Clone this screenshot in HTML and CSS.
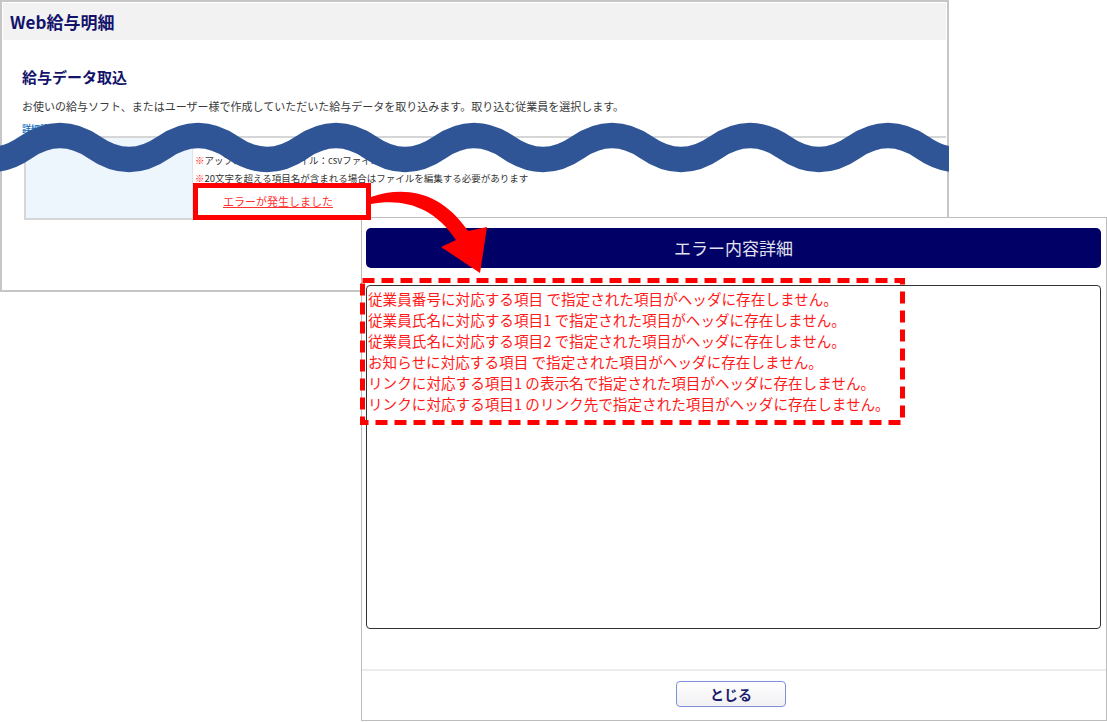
FILE: index.html
```html
<!DOCTYPE html>
<html lang="ja">
  <head>
    <meta charset="UTF-8" />
    <meta name="viewport" content="width=device-width, initial-scale=1.0" />
    <title>Web給与明細 - エラー内容詳細</title>
    <link rel="stylesheet" href="styles.css">
  </head>
  <body>
    <div class="canvas">
      <section class="page-window">
        <header class="app-header">Web給与明細</header>
        <div class="page-body">
          <h2 class="page-title">給与データ取込</h2>
          <p class="lead">お使いの給与ソフト、またはユーザー様で作成していただいた給与データを取り込みます。取り込む従業員を選択します。</p>
          <a class="detail-link">詳細設定</a>
          <div class="import-box">
            <div class="import-label"></div>
            <div class="import-main">
              <p class="note"><span class="mark">※</span>アップロードするファイル：csvファイル</p>
              <p class="note"><span class="mark">※</span>20文字を超える項目名が含まれる場合はファイルを編集する必要があります</p>
              <a class="error-link">エラーが発生しました</a>
            </div>
          </div>
        </div>
      </section>

      <section class="dialog">
        <div class="dialog-main">
          <h3 class="dialog-title">エラー内容詳細</h3>
          <div class="dialog-log">
            <p>従業員番号に対応する項目 で指定された項目がヘッダに存在しません。</p>
            <p>従業員氏名に対応する項目1 で指定された項目がヘッダに存在しません。</p>
            <p>従業員氏名に対応する項目2 で指定された項目がヘッダに存在しません。</p>
            <p>お知らせに対応する項目 で指定された項目がヘッダに存在しません。</p>
            <p>リンクに対応する項目1 の表示名で指定された項目がヘッダに存在しません。</p>
            <p>リンクに対応する項目1 のリンク先で指定された項目がヘッダに存在しません。</p>
          </div>
        </div>
        <footer class="dialog-footer">
          <button class="btn-close">とじる</button>
        </footer>
      </section>

      <!-- wave cut, callout frames and arrow drawn on top of both windows -->
      <svg class="marks" width="1107" height="722" viewBox="0 0 1107 722">
        <defs>
          <clipPath id="panel-clip">
            <rect x="0" y="0" width="949" height="300" />
          </clipPath>
        </defs>
        <path class="wave" clip-path="url(#panel-clip)"
          d="M -43.5 147.5 Q -9 171.5 25.5 147.5 T 94.5 147.5 T 163.5 147.5 T 232.5 147.5 T 301.5 147.5 T 370.5 147.5 T 439.5 147.5 T 508.5 147.5 T 577.5 147.5 T 646.5 147.5 T 715.5 147.5 T 784.5 147.5 T 853.5 147.5 T 922.5 147.5 T 991.5 147.5" />
        <rect class="frame" x="195.5" y="185.5" width="173" height="32" />
        <path class="arrow"
          d="M 371 197 C 405 185 442 192 468 231 L 487 227 L 480 273 L 441 247 L 456 240 C 434 207 404 198 371 204 Z" />
        <rect class="frame-dashed" x="362.5" y="280.5" width="540" height="142" />
      </svg>
    </div>
  </body>
</html>
```

FILE: styles.css
```css
* {
  box-sizing: border-box;
  font-family: "Noto Sans CJK JP", "Noto Sans", sans-serif;
}
body {
  margin: 0;
  background: #fff;
}
p,
h2,
h3 {
  margin: 0;
}
.canvas {
  position: relative;
  width: 1107px;
  height: 722px;
  overflow: hidden;
}

/* back window: import page */
.page-window {
  position: absolute;
  left: 0;
  top: 0;
  width: 949px;
  height: 292px;
  border: 2px solid #c6c6c6;
  padding: 1px;
  background: #fff;
}
.app-header {
  height: 37px;
  line-height: 37px;
  padding-left: 7px;
  background: #f2f2f2;
  color: #13136b;
  font-size: 17px;
  font-weight: 700;
}
.page-body {
  padding: 0 0 0 19px;
}
.page-title {
  margin-top: 27px;
  font-size: 15px;
  line-height: 20px;
  font-weight: 700;
  color: #13136b;
}
.lead {
  margin-top: 11px;
  font-size: 11px;
  line-height: 16px;
  color: #3a3a3a;
}
.detail-link {
  display: block;
  margin-top: 9px;
  font-size: 9px;
  line-height: 12px;
  font-weight: 700;
  color: #2a78c8;
}
.import-box {
  display: grid;
  grid-template-columns: 167px 1fr;
  margin: 1px 0 0 2px;
  border: 2px solid #d6d6d6;
  border-right: 0;
}
.import-label {
  background: #edf5fd;
  border-right: 1px solid #dde3ea;
}
.import-main {
  padding: 13px 0 7px 2px;
}
.note {
  font-size: 9.5px;
  line-height: 18px;
  color: #333;
}
.mark {
  color: #ff2020;
}
.error-link {
  display: inline-block;
  margin: 6px 0 0 28px;
  font-size: 11px;
  line-height: 16px;
  color: #ff3030;
  text-decoration: underline;
}

/* front window: error dialog */
.dialog {
  position: absolute;
  left: 361px;
  top: 217px;
  width: 746px;
  height: 504px;
  border: 1px solid #bcbcbc;
  background: #fff;
}
.dialog-main {
  padding: 10px 5px 0 4px;
}
.dialog-title {
  height: 40px;
  line-height: 40px;
  border-radius: 5px;
  background: #000066;
  color: #e2e2ee;
  font-size: 17px;
  font-weight: 400;
  text-align: center;
}
.dialog-log {
  height: 344px;
  margin-top: 17px;
  padding: 2px 1px;
  border: 1px solid #333;
  border-radius: 4px;
}
.dialog-log p {
  font-size: 14.6px;
  line-height: 21px;
  color: #ff1a1a;
  white-space: nowrap;
}
.dialog-footer {
  margin-top: 40px;
  padding-top: 10px;
  border-top: 2px solid #ececec;
  text-align: center;
}
.btn-close {
  width: 110px;
  height: 26px;
  margin-right: 6px;
  border: 1px solid #7f91d9;
  border-radius: 4px;
  background: linear-gradient(#ffffff, #f1f1f4);
  color: #1b1b6b;
  font-size: 14px;
  font-weight: 700;
}

/* overlay marks */
.marks {
  position: absolute;
  left: 0;
  top: 0;
  pointer-events: none;
}
.wave {
  fill: none;
  stroke: #2f5597;
  stroke-width: 25;
}
.frame {
  fill: none;
  stroke: #ff0000;
  stroke-width: 5;
}
.arrow {
  fill: #ff0000;
}
.frame-dashed {
  fill: none;
  stroke: #ff0000;
  stroke-width: 5;
  stroke-dasharray: 12 7;
}
```
